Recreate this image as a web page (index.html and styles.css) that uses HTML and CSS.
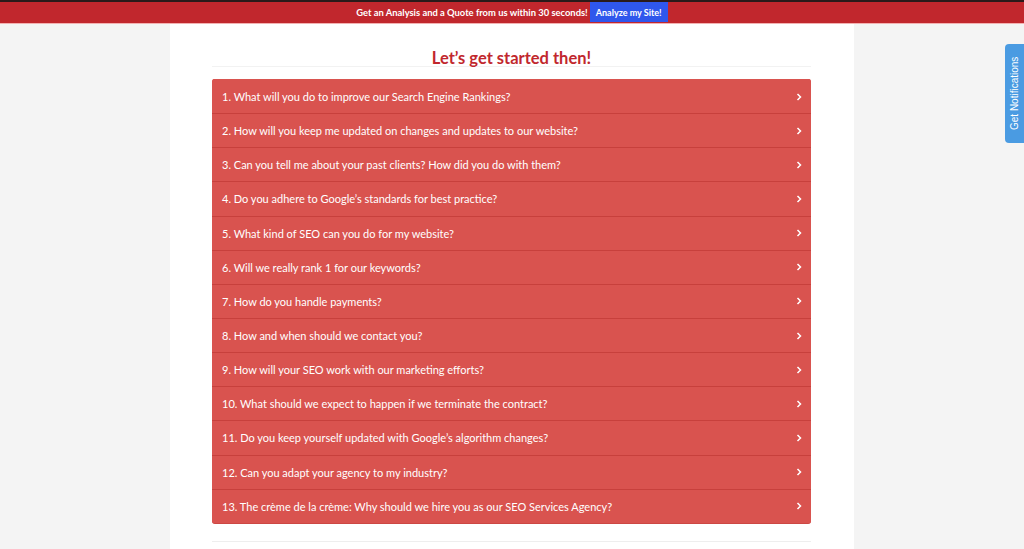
FILE: index.html
```html
<!DOCTYPE html>
<html lang="en">
<head>
<meta charset="utf-8">
<title>FAQ</title>
<link rel="stylesheet" href="styles.css">
</head>
<body>
<div class="topbar">
  <span class="topbar-text">Get an Analysis and a Quote from us within 30 seconds!</span>
  <a class="topbar-btn" href="#">Analyze my Site!</a>
</div>
<main class="page">
  <h2 class="title">Let’s get started then!</h2>
  <div class="accordion">
    <div class="item"><span>1. What will you do to improve our Search Engine Rankings?</span><svg class="chev" viewBox="0 0 6 8"><polyline points="1.5,1 4.5,4 1.5,7"/></svg></div>
    <div class="item"><span>2. How will you keep me updated on changes and updates to our website?</span><svg class="chev" viewBox="0 0 6 8"><polyline points="1.5,1 4.5,4 1.5,7"/></svg></div>
    <div class="item"><span>3. Can you tell me about your past clients? How did you do with them?</span><svg class="chev" viewBox="0 0 6 8"><polyline points="1.5,1 4.5,4 1.5,7"/></svg></div>
    <div class="item"><span>4. Do you adhere to Google’s standards for best practice?</span><svg class="chev" viewBox="0 0 6 8"><polyline points="1.5,1 4.5,4 1.5,7"/></svg></div>
    <div class="item"><span>5. What kind of SEO can you do for my website?</span><svg class="chev" viewBox="0 0 6 8"><polyline points="1.5,1 4.5,4 1.5,7"/></svg></div>
    <div class="item"><span>6. Will we really rank 1 for our keywords?</span><svg class="chev" viewBox="0 0 6 8"><polyline points="1.5,1 4.5,4 1.5,7"/></svg></div>
    <div class="item"><span>7. How do you handle payments?</span><svg class="chev" viewBox="0 0 6 8"><polyline points="1.5,1 4.5,4 1.5,7"/></svg></div>
    <div class="item"><span>8. How and when should we contact you?</span><svg class="chev" viewBox="0 0 6 8"><polyline points="1.5,1 4.5,4 1.5,7"/></svg></div>
    <div class="item"><span>9. How will your SEO work with our marketing efforts?</span><svg class="chev" viewBox="0 0 6 8"><polyline points="1.5,1 4.5,4 1.5,7"/></svg></div>
    <div class="item"><span>10. What should we expect to happen if we terminate the contract?</span><svg class="chev" viewBox="0 0 6 8"><polyline points="1.5,1 4.5,4 1.5,7"/></svg></div>
    <div class="item"><span>11. Do you keep yourself updated with Google’s algorithm changes?</span><svg class="chev" viewBox="0 0 6 8"><polyline points="1.5,1 4.5,4 1.5,7"/></svg></div>
    <div class="item"><span>12. Can you adapt your agency to my industry?</span><svg class="chev" viewBox="0 0 6 8"><polyline points="1.5,1 4.5,4 1.5,7"/></svg></div>
    <div class="item"><span>13. The crème de la crème: Why should we hire you as our SEO Services Agency?</span><svg class="chev" viewBox="0 0 6 8"><polyline points="1.5,1 4.5,4 1.5,7"/></svg></div>
  </div>
  <div class="rule"></div>
</main>
<div class="notify">Get Notifications</div>
</body>
</html>
```
FILE: styles.css
```css
* { box-sizing: border-box; }
html, body { margin: 0; padding: 0; }
body {
  background: #f4f4f4;
  font-family: "Lato", "Liberation Sans", sans-serif;
  height: 549px;
  overflow: hidden;
}
.topbar {
  height: 24px;
  border-top: 2px solid #2a1a1a;
  border-bottom: 1px solid #f3b2b2;
  background: #c1272d;
  display: flex;
  align-items: center;
  justify-content: center;
  gap: 2px;
}
.topbar-text {
  color: #fff;
  font-family: "Lato", "Liberation Sans", sans-serif;
  font-weight: 700;
  font-size: 9.4px;
}
.topbar-btn {
  background: #2f57ec;
  color: #fff;
  text-decoration: none;
  font-family: "Lato", "Liberation Sans", sans-serif;
  font-weight: 700;
  font-size: 9px;
  height: 20px;
  width: 78px;
  display: flex;
  align-items: center;
  justify-content: center;
  margin-top: -1px;
}
.page {
  width: 684px;
  margin: 0 auto;
  background: #fff;
  height: 525px;
  padding: 26px 43px 0 42px;
}
.title {
  margin: 0;
  text-align: center;
  color: #c1272d;
  font-family: "Lato", "Liberation Sans", sans-serif;
  font-weight: 700;
  font-size: 16.5px;
  line-height: 16px;
  border-bottom: 1px solid #f2f2f2;
}
.accordion {
  margin-top: 12px;
  border-radius: 3px;
  overflow: hidden;
  background: #d9534f;
  border-bottom: 1px solid #cc4844;
}
.item {
  height: 34.15px;
  display: flex;
  align-items: center;
  justify-content: space-between;
  padding: 0 9px 0 10px;
  color: #fff;
  font-size: 11px;
  background: #d9534f;
  border-top: 1px solid #c7403c;
}
.item:first-child { border-top-color: #d9534f; }
.chev {
  width: 6px;
  height: 8px;
  fill: none;
  stroke: #fff;
  stroke-width: 1.5;
}
.rule {
  margin-top: 17px;
  border-top: 1px solid #eeeeee;
}
.notify {
  position: absolute;
  top: 44px;
  right: 0;
  width: 19px;
  height: 99px;
  background: #4a9be2;
  color: #fff;
  font-family: "Liberation Sans", sans-serif;
  font-size: 10px;
  writing-mode: vertical-rl;
  transform: rotate(180deg);
  border-radius: 0 4px 4px 0;
  display: flex;
  align-items: center;
  justify-content: center;
}
```
